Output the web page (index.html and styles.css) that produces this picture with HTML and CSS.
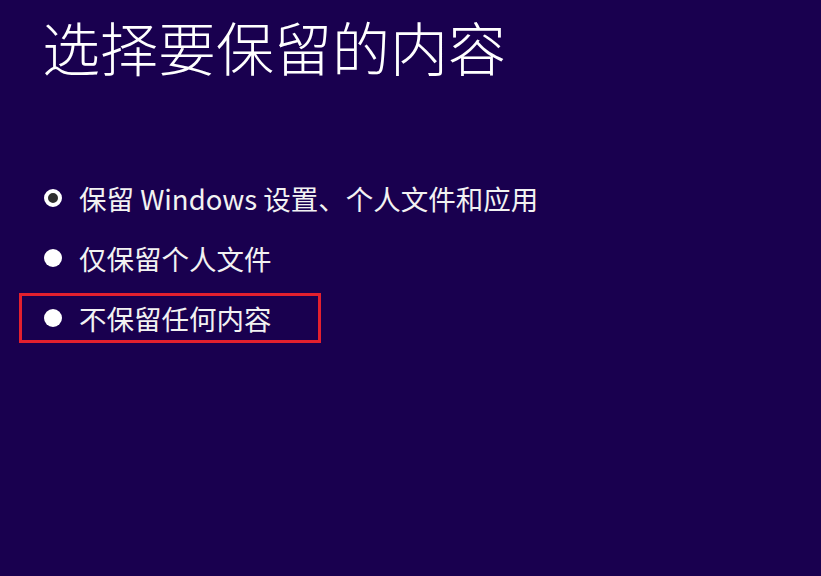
FILE: index.html
```html
<!DOCTYPE html>
<html lang="zh-CN">
<head>
    <meta charset="UTF-8">
    <title>选择要保留的内容</title>
    <link rel="stylesheet" href="styles.css">
</head>
<body>

<h1 class="page-title">选择要保留的内容</h1>

<div class="options">
    <div class="option">
        <span class="radio checked"></span>
        <span class="label">保留 Windows 设置、个人文件和应用</span>
    </div>
    <div class="option">
        <span class="radio"></span>
        <span class="label">仅保留个人文件</span>
    </div>
    <div class="option marked">
        <span class="radio"></span>
        <span class="label">不保留任何内容</span>
    </div>
</div>

</body>
</html>
```

FILE: styles.css
```css
html, body {
    margin: 0;
    padding: 0;
    background-color: #19004f;
    width: 821px;
    height: 576px;
    overflow: hidden;
    font-family: "Noto Sans CJK SC", sans-serif;
    color: #fff;
}
.page-title {
    margin: 11px 0 0 42px;
    font-size: 58px;
    font-weight: 300;
    line-height: 70px;
    color: #fff;
}
.options {
    margin: 92px 0 0 19px;
}
.option {
    display: flex;
    align-items: center;
    width: 302px;
    height: 50px;
    box-sizing: border-box;
    padding-left: 22px;
    margin-bottom: 10px;
    border: 3px solid transparent;
    white-space: nowrap;
}
.option.marked {
    border-color: #e3202e;
}
.radio {
    width: 18px;
    height: 18px;
    border-radius: 50%;
    background-color: #fff;
    box-sizing: border-box;
    margin-right: 17px;
    flex-shrink: 0;
}
.radio.checked {
    background-color: #2e2e2e;
    border: 4px solid #fff;
}
.label {
    font-size: 27.5px;
    color: #f2f2f2;
}
```
